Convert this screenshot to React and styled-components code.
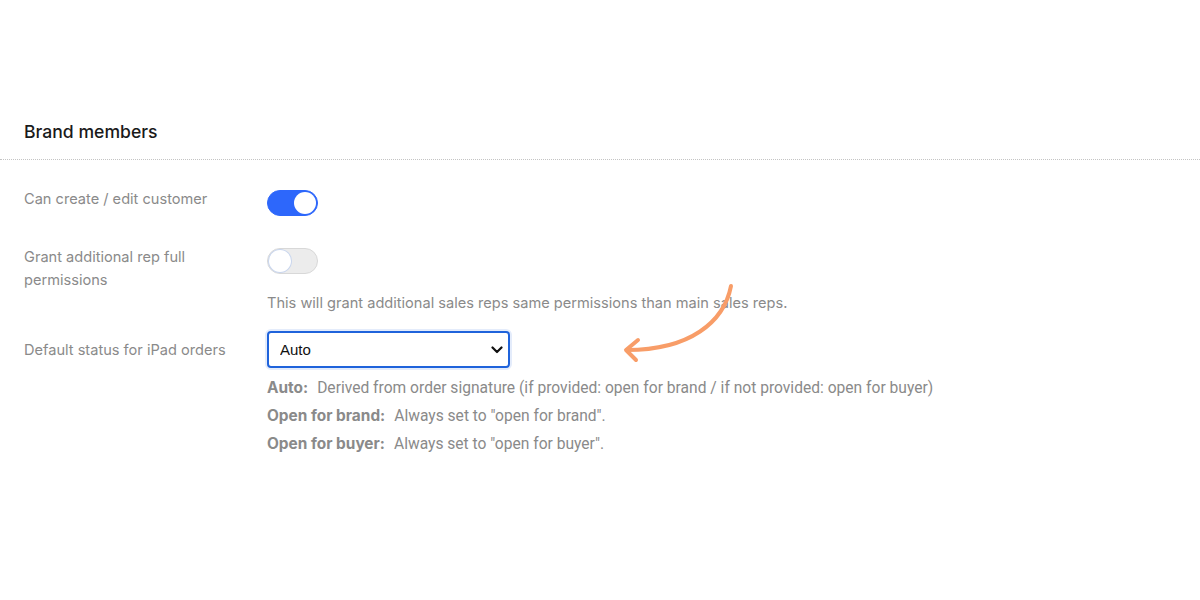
import { createGlobalStyle, styled } from 'styled-components';

const Global = createGlobalStyle`
  html, body { margin: 0; padding: 0; background: #fff; }
  body { font-family: Inter, "Noto Sans", sans-serif; }
`;

const Page = styled.div`
  position: relative;
  width: 1200px;
  height: 600px;
  padding-top: 120px;
  box-sizing: border-box;
`;

const Header = styled.div`
  padding: 0 24px 15px;
  border-bottom: 1px dotted #c4c4c4;
`;

const Title = styled.h2`
  margin: 0;
  font-size: 17.6px;
  font-weight: 500;
  color: #1a1a1a;
  line-height: 24px;
`;

const Body = styled.div`
  padding: 30px 24px 0;
  display: flex;
  flex-direction: column;
  gap: 32px;
`;

const Row = styled.div`
  display: grid;
  grid-template-columns: 243px 1fr;
  align-items: start;
`;

const Label = styled.div`
  font-size: 14.6px;
  line-height: 23px;
  color: #8a8a8a;
  width: 215px;
  margin-top: -2px;
  padding-top: ${(p) => p.$offset || 0}px;
`;

const Field = styled.div`
  display: flex;
  flex-direction: column;
  align-items: flex-start;
`;

const Toggle = styled.div`
  position: relative;
  width: 51px;
  height: 26px;
  border-radius: 13px;
  box-sizing: border-box;
  background: ${(p) => (p.$on ? '#2d67fb' : '#ececec')};
  border: 1px solid ${(p) => (p.$on ? '#2d67fb' : '#d8d8d8')};
`;

const Knob = styled.span`
  position: absolute;
  top: 1px;
  left: ${(p) => (p.$on ? '26px' : '1px')};
  width: 22px;
  height: 22px;
  border-radius: 50%;
  background: #fff;
  box-shadow: ${(p) => (p.$on ? 'none' : '0 0 0 1px #c9d6ee')};
`;

const Hint = styled.div`
  margin-top: 19px;
  margin-bottom: -14px;
  font-size: 14.6px;
  line-height: 20px;
  color: #8a8a8a;
`;

const Select = styled.select`
  width: 243px;
  height: 37px;
  border: 2px solid #1f63db;
  border-radius: 4px;
  box-shadow: 0 0 0 2px #e4ecfb;
  background: #fff;
  font-family: "Liberation Sans", Arial, sans-serif;
  font-size: 15px;
  color: #111;
  padding: 0 10px 0 11px;
  appearance: none;
  background-image: url("data:image/svg+xml;utf8,<svg xmlns='http://www.w3.org/2000/svg' width='12' height='8' viewBox='0 0 12 8'><path d='M1.5 1.5 L6 6 L10.5 1.5' fill='none' stroke='%23111' stroke-width='2.2' stroke-linecap='round' stroke-linejoin='round'/></svg>");
  background-repeat: no-repeat;
  background-position: right 5px center;
  outline: none;
`;

const Legend = styled.div`
  margin-top: 10px;
  display: flex;
  flex-direction: column;
  gap: 8px;
`;

const LegendLine = styled.div`
  font-family: Roboto, "Liberation Sans", sans-serif;
  font-size: 15.6px;
  line-height: 20px;
  color: #8a8a8a;
  white-space: nowrap;

  b {
    font-family: Inter, "Noto Sans", sans-serif;
    font-size: 15.4px;
    font-weight: 700;
    margin-right: 9px;
  }
`;

const Arrow = styled.svg`
  position: absolute;
  left: 0;
  top: 0;
  pointer-events: none;
`;

const legend = [
  ['Auto:', 'Derived from order signature (if provided: open for brand / if not provided: open for buyer)'],
  ['Open for brand:', 'Always set to "open for brand".'],
  ['Open for buyer:', 'Always set to "open for buyer".'],
];

export default function App() {
  return (
    <Page>
      <Global />
      <Header>
        <Title>Brand members</Title>
      </Header>
      <Body>
        <Row>
          <Label>Can create / edit customer</Label>
          <Field>
            <Toggle $on>
              <Knob $on />
            </Toggle>
          </Field>
        </Row>
        <Row>
          <Label>Grant additional rep full permissions</Label>
          <Field>
            <Toggle>
              <Knob />
            </Toggle>
            <Hint>This will grant additional sales reps same permissions than main sales reps.</Hint>
          </Field>
        </Row>
        <Row>
          <Label $offset={10}>Default status for iPad orders</Label>
          <Field>
            <Select defaultValue="auto">
              <option value="auto">Auto</option>
              <option value="brand">Open for brand</option>
              <option value="buyer">Open for buyer</option>
            </Select>
            <Legend>
              {legend.map(([k, v]) => (
                <LegendLine key={k}>
                  <b>{k}</b>
                  {v}
                </LegendLine>
              ))}
            </Legend>
          </Field>
        </Row>
      </Body>
      <Arrow width="1200" height="600" viewBox="0 0 1200 600">
        <path
          d="M731 286 C 724 322, 690 350, 627 350"
          fill="none"
          stroke="#f89d68"
          strokeWidth="4"
          strokeLinecap="round"
        />
        <path
          d="M638 340 L626 350 L636 360"
          fill="none"
          stroke="#f89d68"
          strokeWidth="4"
          strokeLinecap="round"
          strokeLinejoin="round"
        />
      </Arrow>
    </Page>
  );
}
